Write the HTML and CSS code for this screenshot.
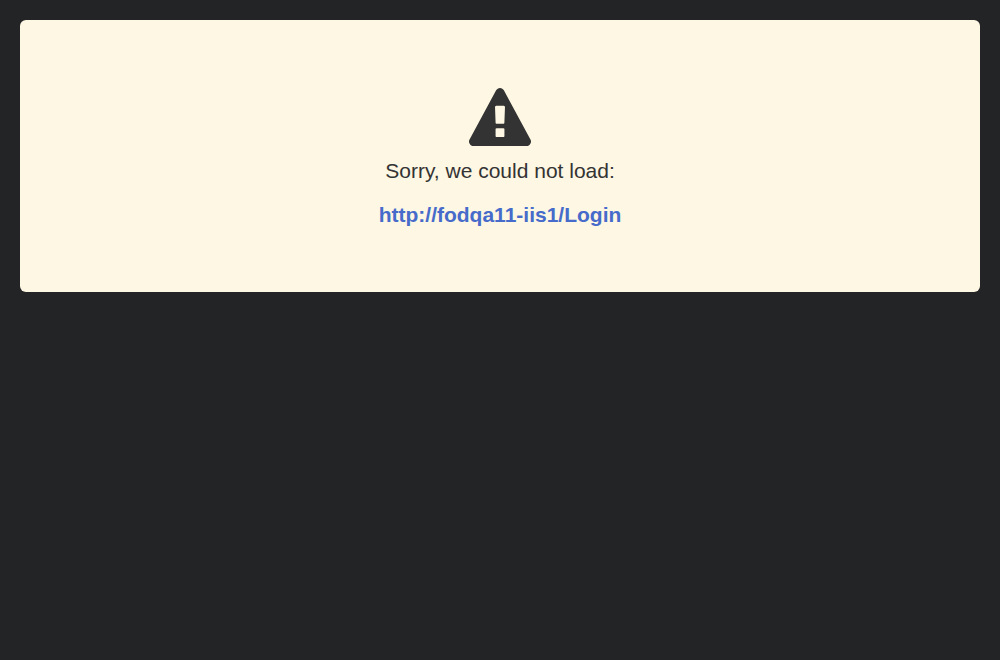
FILE: index.html
```html
<!DOCTYPE html>
<html lang="en">
<head>
<meta charset="utf-8">
<title>Load error</title>
<link rel="stylesheet" href="styles.css">
</head>
<body>
<main class="well">
  <svg class="warning-icon" viewBox="0 0 1792 1664" preserveAspectRatio="none" aria-hidden="true"><path d="M1024 1375v-190q0-14-9.500-23.500t-22.500-9.500h-192q-13 0-22.500 9.500t-9.500 23.500v190q0 14 9.500 23.500t22.500 9.500h192q13 0 22.500-9.500t9.500-23.500zm-2-374l18-459q0-12-10-19-13-11-24-11h-220q-11 0-24 11-10 7-10 21l17 457q0 10 10 16.500t24 6.500h185q14 0 23.500-6.500t10.500-16.500zm-14-934l768 1408q35 63-2 126-17 29-46.500 46t-63.500 17h-1536q-34 0-63.500-17t-46.500-46q-37-63-2-126l768-1408q17-31 47-49t65-18 65 18 47 49z"/></svg>
  <p class="message">Sorry, we could not load:</p>
  <a class="address" href="#">http://fodqa11-iis1/Login</a>
</main>
</body>
</html>
```
FILE: styles.css
```css
body {
  margin: 0;
  padding: 20px;
  background: #232426;
  color: #333;
  font: 21px/30px "Liberation Sans", Arial, sans-serif;
}
.well {
  box-sizing: border-box;
  height: 272px;
  padding-top: 68px;
  display: flex;
  flex-direction: column;
  align-items: center;
  border-radius: 6px;
  background: #fdf7e3;
}
.warning-icon {
  width: 62px;
  height: 58px;
  fill: #333;
}
.message {
  margin: 10px 0 14px;
}
.address {
  color: #466bcb;
  font-weight: bold;
  text-decoration: none;
}
```
